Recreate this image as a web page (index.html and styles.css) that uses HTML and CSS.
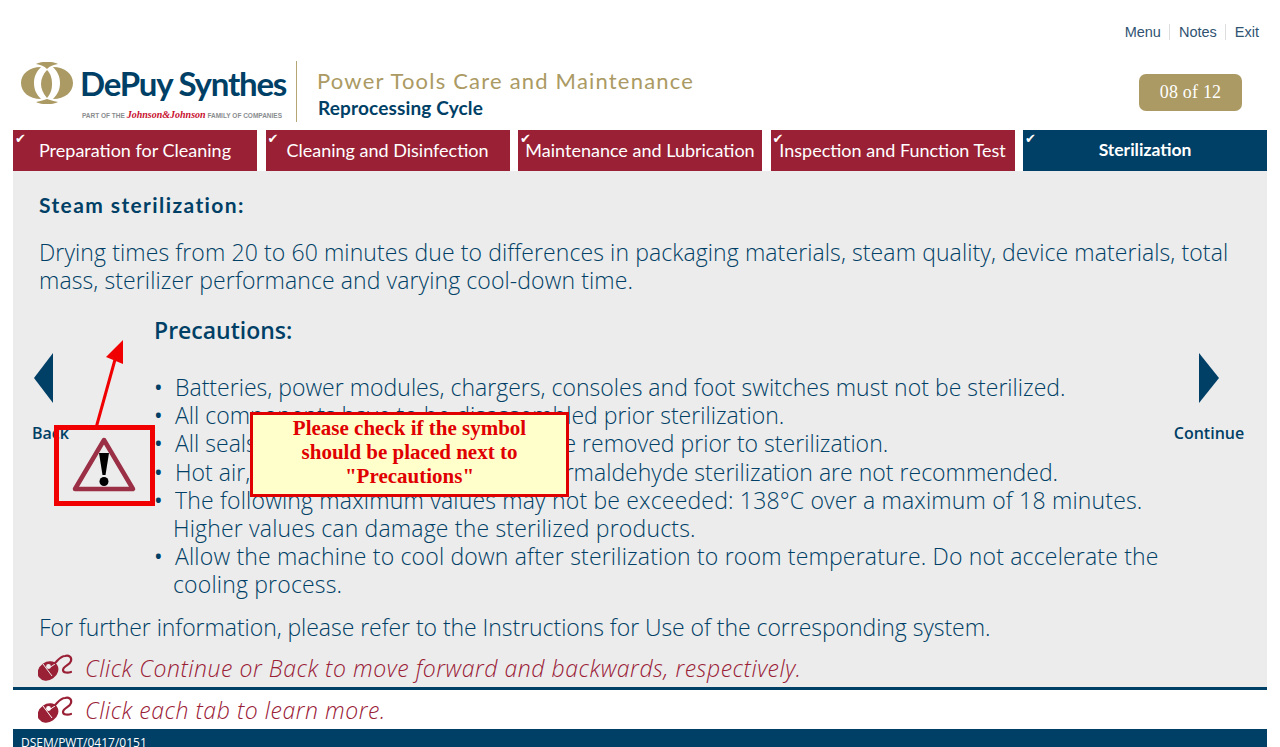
FILE: index.html
```html
<!DOCTYPE html>
<html lang="en">
<head>
    <meta charset="UTF-8">
    <meta name="viewport" content="width=device-width, initial-scale=1.0">
    <title>Power Tools Care and Maintenance</title>
    <link rel="stylesheet" href="styles.css">
</head>
<body>
    <div class="top-links">
        <a>Menu</a><span class="sep"></span><a>Notes</a><span class="sep"></span><a>Exit</a>
    </div>

    <header class="brand-row">
        <div class="logo">
            <div class="logo-main">
                <svg class="logo-mark" width="52" height="42" viewBox="0 0 52 42">
                    <g fill="#ab9a63">
                        <path d="M20 5C8 5 0 12 0 21S8 37 20 37C15 32 13 27 13 21S15 10 20 5Z"/>
                        <path d="M32 5C44 5 52 12 52 21S44 37 32 37C37 32 39 27 39 21S37 10 32 5Z"/>
                        <path d="M26 8C30 12 31 17 31 22S30 31 26 36C22 31 20 27 20 22S22 12 26 8Z"/>
                        <path d="M15 2C21-1 31-1 37 2 32 3 29 4 26 7 23 4 20 3 15 2Z"/>
                        <path d="M15 40C21 43 31 43 37 40 32 39 29 38 26 37 23 38 20 39 15 40Z"/>
                    </g>
                </svg>
                <span class="logo-name">DePuy Synthes</span>
            </div>
            <div class="logo-sub">PART OF THE <span class="jj">Johnson&amp;Johnson</span> FAMILY OF COMPANIES</div>
        </div>
        <div class="titles">
            <div class="title">Power Tools Care and Maintenance</div>
            <div class="subtitle">Reprocessing Cycle</div>
        </div>
        <div class="counter">08 of 12</div>
    </header>

    <nav class="tabs">
        <div class="tab done">Preparation for Cleaning</div>
        <div class="tab done">Cleaning and Disinfection</div>
        <div class="tab done">Maintenance and Lubrication</div>
        <div class="tab done">Inspection and Function Test</div>
        <div class="tab current">Sterilization</div>
    </nav>

    <main class="content">
        <h2 class="heading">Steam sterilization:</h2>
        <p class="intro">Drying times from 20 to 60 minutes due to differences in packaging materials, steam quality, device materials, total mass, sterilizer performance and varying cool-down time.</p>

        <div class="middle">
            <div class="nav-btn back">
                <svg width="20" height="50" viewBox="0 0 20 50"><path fill="#003f66" d="M19 0V50L0 25Z"/></svg>
                <span>Back</span>
            </div>
            <div class="precautions">
                <h3>Precautions:</h3>
                <ul>
                    <li>Batteries, power modules, chargers, consoles and foot switches must not be sterilized.</li>
                    <li>All components have to be disassembled prior sterilization.</li>
                    <li>All seals and protective covers must be removed prior to sterilization.</li>
                    <li>Hot air, ethylene oxide, plasma and formaldehyde sterilization are not recommended.</li>
                    <li class="wide">The following maximum values may not be exceeded: 138°C over a maximum of 18 minutes. Higher values can damage the sterilized products.</li>
                    <li class="wide">Allow the machine to cool down after sterilization to room temperature. Do not accelerate the cooling process.</li>
                </ul>
            </div>
            <div class="nav-btn continue">
                <svg width="20" height="50" viewBox="0 0 20 50"><path fill="#003f66" d="M0 0V50L20 25Z"/></svg>
                <span>Continue</span>
            </div>
        </div>

        <p class="further">For further information, please refer to the Instructions for Use of the corresponding system.</p>
        <p class="hint">
            <svg class="mouse" width="36" height="28" viewBox="0 0 36 28">
                <ellipse cx="10" cy="17" rx="11" ry="9" fill="#9a2036" transform="rotate(-35 10 17)"/>
                <path fill="none" stroke="#ececec" stroke-width="1" d="M5 10L14 22M11 14L17 10"/>
                <circle cx="10.5" cy="12.5" r="2.4" fill="#ececec"/>
                <path fill="none" stroke="#9a2036" stroke-width="2.2" stroke-linecap="round" d="M17 9C21 5 23 2 27 2 31 1 34 3 33 7 32 11 25 12 25 16 25 19 30 19 33 18"/>
            </svg>
            Click Continue or Back to move forward and backwards, respectively.
        </p>

        <!-- review note on top of the slide -->
        <svg class="note-arrow" width="40" height="92" viewBox="0 0 40 92">
            <path fill="none" stroke="#f00000" stroke-width="3" d="M2 90L22 18"/>
            <path fill="#f00000" d="M29 2L29 26 12 19Z"/>
        </svg>
        <div class="note-symbol">
            <svg width="66" height="60" viewBox="0 0 66 60">
                <path fill="none" stroke="#9a2f45" stroke-width="4.5" stroke-linejoin="round" d="M32 4L61 53H3Z"/>
                <path d="M27 17H37L33.5 39H30.5Z"/>
                <circle cx="32" cy="45.5" r="4.5"/>
            </svg>
        </div>
        <div class="note-box">Please check if the symbol should be placed next to "Precautions"</div>
    </main>

    <div class="tab-hint">
        <svg class="mouse" width="36" height="28" viewBox="0 0 36 28">
            <ellipse cx="10" cy="17" rx="11" ry="9" fill="#9a2036" transform="rotate(-35 10 17)"/>
            <path fill="none" stroke="#fff" stroke-width="1" d="M5 10L14 22M11 14L17 10"/>
            <circle cx="10.5" cy="12.5" r="2.4" fill="#fff"/>
            <path fill="none" stroke="#9a2036" stroke-width="2.2" stroke-linecap="round" d="M17 9C21 5 23 2 27 2 31 1 34 3 33 7 32 11 25 12 25 16 25 19 30 19 33 18"/>
        </svg>
        Click each tab to learn more.
    </div>

    <footer class="footer">DSEM/PWT/0417/0151</footer>
</body>
</html>
```

FILE: styles.css
```css
* {
    box-sizing: border-box;
}

html, body {
    height: 747px;
    overflow: hidden;
}

body {
    margin: 0;
    padding: 0 13px;
    background: #fff;
    color: #003f66;
    font-family: 'Open Sans', sans-serif;
}

.top-links {
    display: flex;
    justify-content: flex-end;
    align-items: center;
    height: 24px;
    margin-top: 20px;
    padding-right: 8px;
    font-family: 'Liberation Sans', sans-serif;
    font-size: 14.5px;
    color: #2f5371;
}

.sep {
    width: 1px;
    height: 16px;
    margin: 0 8.5px;
    background: #ddd;
}

.brand-row {
    display: flex;
    align-items: flex-start;
    height: 86px;
    padding-top: 18px;
}

.logo {
    width: 275px;
    margin-left: 8px;
}

.logo-main {
    display: flex;
    align-items: center;
    height: 42px;
}

.logo-mark {
    flex: none;
}

.logo-name {
    margin-left: 7px;
    font-family: 'Lato', sans-serif;
    font-size: 33px;
    font-weight: 700;
    letter-spacing: -1.2px;
    white-space: nowrap;
}

.logo-sub {
    margin-top: 5px;
    margin-left: 61px;
    font-family: 'Liberation Sans', sans-serif;
    font-size: 6.5px;
    font-weight: 700;
    color: #8a8d8f;
    white-space: nowrap;
}

.jj {
    font-family: 'Liberation Serif', serif;
    font-style: italic;
    font-size: 10px;
    color: #c8102e;
}

.titles {
    height: 61px;
    margin-top: -1px;
    padding-left: 20px;
    border-left: 1px solid #b5a775;
}

.title {
    margin-top: 6px;
    font-family: 'Lato', sans-serif;
    font-size: 22px;
    letter-spacing: 1.2px;
    color: #ab9a63;
    white-space: nowrap;
}

.subtitle {
    margin-top: 2px;
    margin-left: 1px;
    font-family: 'Lato', sans-serif;
    font-size: 19px;
    font-weight: 700;
    letter-spacing: 0.15px;
    white-space: nowrap;
}

.counter {
    width: 103px;
    height: 37px;
    margin-left: auto;
    margin-right: 25px;
    margin-top: 12px;
    border-radius: 7px;
    background: #ab9a63;
    color: #fff;
    font-family: 'Liberation Serif', serif;
    font-size: 18px;
    letter-spacing: 0.2px;
    line-height: 37px;
    text-align: center;
}

.tabs {
    display: flex;
    justify-content: space-between;
    height: 41px;
}

.tab {
    position: relative;
    width: 244px;
    color: #fff;
    font-family: 'Lato', sans-serif;
    font-size: 18px;
    line-height: 40px;
    text-align: center;
    white-space: nowrap;
}

.tab::before {
    content: "✔";
    position: absolute;
    top: -11px;
    left: 2px;
    font-family: 'DejaVu Sans', sans-serif;
    font-size: 13px;
}

.done {
    background: #9a2036;
}

.current {
    background: #003f66;
    font-size: 17.5px;
    font-weight: 700;
}

.content {
    position: relative;
    height: 519px;
    padding: 20px 26px 0;
    background: #ececec;
    border-bottom: 3px solid #003f66;
}

.heading {
    margin: 0;
    font-family: 'Lato', sans-serif;
    font-size: 21px;
    line-height: 28px;
    font-weight: 700;
    letter-spacing: 1.4px;
}

.intro {
    margin: 19px 0 0;
    font-size: 23px;
    font-weight: 300;
    letter-spacing: 0.1px;
    line-height: 28px;
}

.middle {
    display: flex;
    margin-top: 22px;
}

.nav-btn {
    display: flex;
    flex-direction: column;
    align-items: center;
    flex: none;
    padding-top: 37px;
    font-size: 16px;
    font-weight: 600;
}

.nav-btn span {
    margin-top: 19px;
}

.back {
    align-items: flex-start;
    width: 120px;
    margin-left: -5px;
}

.back span {
    margin-left: -2px;
}

.continue {
    width: 72px;
    margin-left: auto;
    margin-right: -4px;
}

.precautions {
    flex: 1;
}

.precautions h3 {
    margin: 0;
    font-size: 23px;
    font-weight: 600;
    line-height: 28px;
}

.precautions ul {
    margin: 29px 0 0;
    padding: 0 0 0 19px;
    list-style: none;
    font-size: 23px;
    font-weight: 300;
    letter-spacing: 0.02px;
    line-height: 28.2px;
}

.precautions li {
    text-indent: -19px;
}

.precautions li::before {
    content: "•";
    display: inline-block;
    width: 21px;
    text-indent: 0;
    font-weight: 400;
}

.precautions li.wide {
    letter-spacing: 0.18px;
}

.further {
    margin: 14px 0 0;
    font-size: 23px;
    font-weight: 300;
    letter-spacing: -0.05px;
    line-height: 28px;
}

.hint, .tab-hint {
    display: flex;
    align-items: center;
    gap: 11px;
    color: #9a2036;
    font-size: 23px;
    font-weight: 300;
    font-style: italic;
    letter-spacing: 0.55px;
}

.hint {
    margin: 13px 0 0 -1px;
    height: 28px;
}

.tab-hint {
    height: 39px;
    padding-left: 25px;
}

.footer {
    height: 18px;
    padding: 7px 8px 0;
    overflow: hidden;
    background: #003f66;
    color: #fff;
    font-size: 12px;
    line-height: 14px;
}

.note-symbol {
    position: absolute;
    left: 41px;
    top: 254px;
    display: flex;
    align-items: center;
    justify-content: center;
    width: 101px;
    height: 81px;
    border: 5px solid #f00000;
}

.note-arrow {
    position: absolute;
    left: 81px;
    top: 167px;
}

.note-box {
    position: absolute;
    left: 237px;
    top: 241px;
    display: flex;
    align-items: center;
    justify-content: center;
    width: 319px;
    height: 85px;
    padding: 0 30px 6px;
    border: 3px solid #e00000;
    background: #ffffcc;
    color: #e00000;
    font-family: 'Liberation Serif', serif;
    font-size: 21px;
    font-weight: 700;
    line-height: 24px;
    text-align: center;
}
```
